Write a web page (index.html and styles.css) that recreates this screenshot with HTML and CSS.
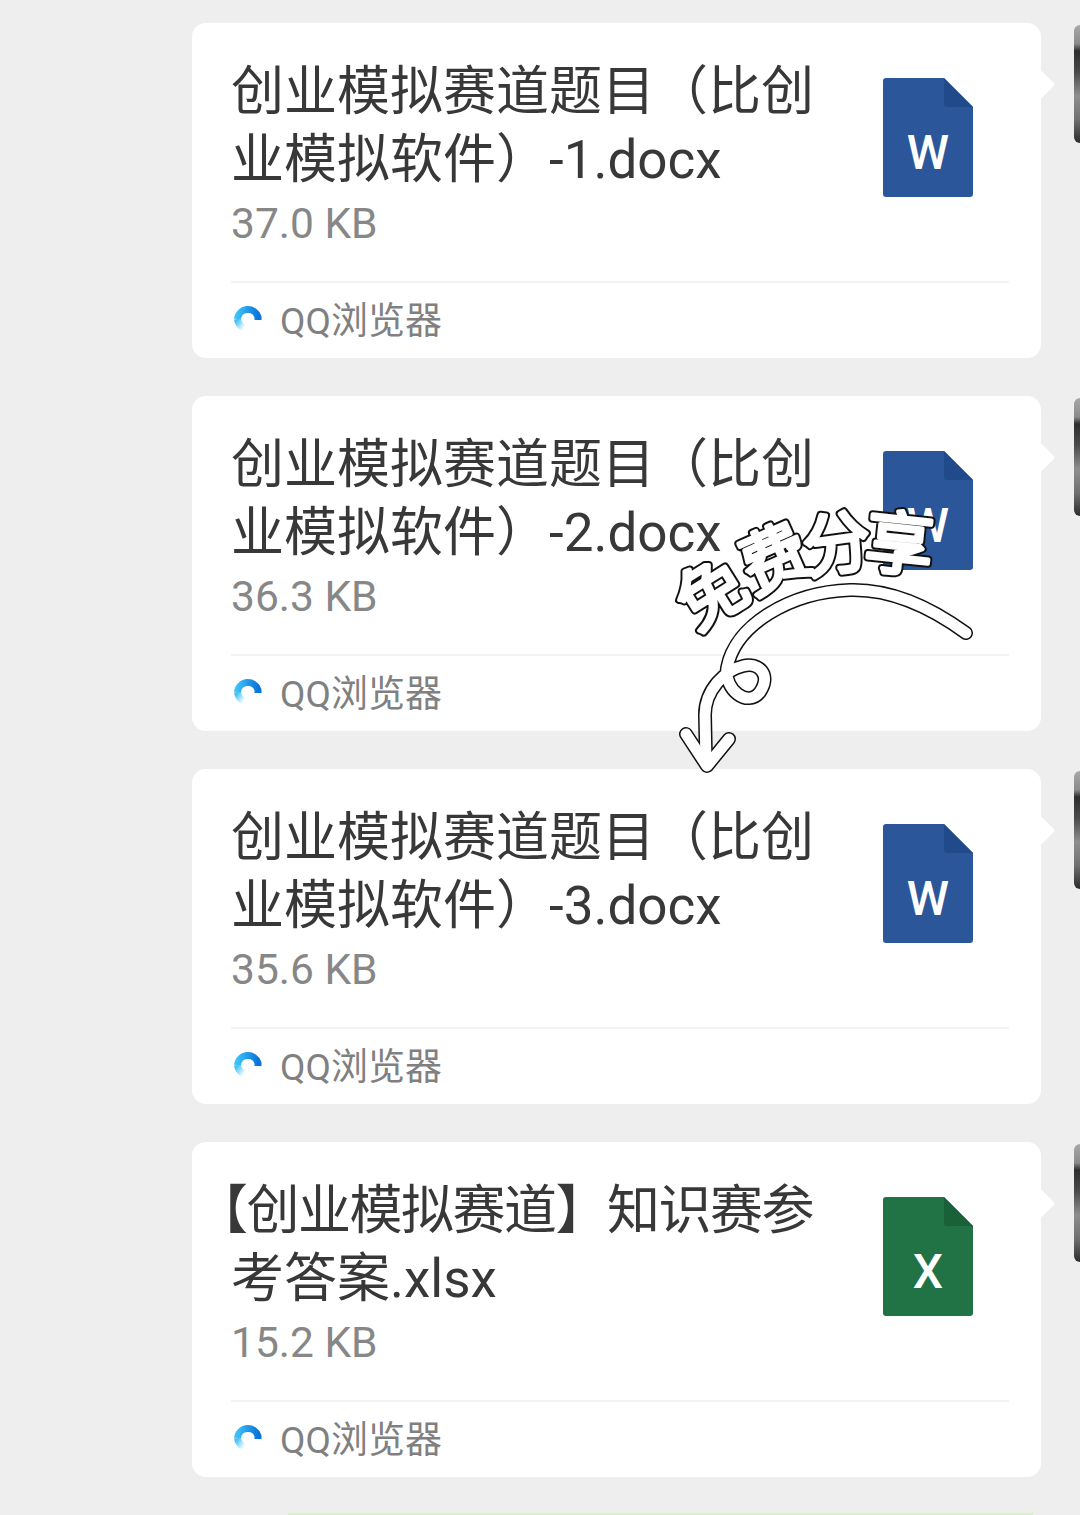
FILE: index.html
```html
<!DOCTYPE html>
<html lang="zh-CN">
<head>
  <meta charset="UTF-8">
  <meta name="viewport" content="width=device-width, initial-scale=1.0">
  <title>文件消息</title>
  <link rel="stylesheet" href="styles.css">
</head>
<body>
  <svg class="defs" width="0" height="0">
    <defs>
      <linearGradient id="qq-blue" x1="0" y1="0" x2="1" y2="0">
        <stop offset="0" stop-color="#3dc0f7"/>
        <stop offset="1" stop-color="#0b74dc"/>
      </linearGradient>
      <linearGradient id="qq-fade" x1="0" y1="0" x2="1" y2="1">
        <stop offset="0" stop-color="#3dc0f7"/>
        <stop offset="1" stop-color="#ffffff"/>
      </linearGradient>
      <symbol id="qq-logo" viewBox="0 0 32 32">
        <path class="qq-tail" d="M5.5 17 C6 21 8 24 12 26"/>
        <path class="qq-arc" d="M5.5 17 A10.5 10.5 0 0 1 26 15 L26 18"/>
      </symbol>
    </defs>
  </svg>

  <div class="list">
    <div class="row">
      <div class="card">
        <div class="card-top">
          <div class="info">
            <div class="name">创业模拟赛道题目（比创<br>业模拟软件）-1.docx</div>
            <div class="size">37.0 KB</div>
          </div>
          <svg class="file-icon word" width="90" height="119" viewBox="0 0 90 119">
            <path class="sheet" d="M3 0 H61 L90 29 V116 a3 3 0 0 1 -3 3 H3 a3 3 0 0 1 -3 -3 V3 a3 3 0 0 1 3 -3 Z"/>
            <path class="fold" d="M61 0 L90 29 H64 a3 3 0 0 1 -3 -3 Z"/>
            <text x="45" y="91">W</text>
          </svg>
        </div>
        <div class="source"><svg class="qq"><use href="#qq-logo"/></svg><span>QQ浏览器</span></div>
      </div>
      <div class="avatar"></div>
    </div>

    <div class="row">
      <div class="card">
        <div class="card-top">
          <div class="info">
            <div class="name">创业模拟赛道题目（比创<br>业模拟软件）-2.docx</div>
            <div class="size">36.3 KB</div>
          </div>
          <svg class="file-icon word" width="90" height="119" viewBox="0 0 90 119">
            <path class="sheet" d="M3 0 H61 L90 29 V116 a3 3 0 0 1 -3 3 H3 a3 3 0 0 1 -3 -3 V3 a3 3 0 0 1 3 -3 Z"/>
            <path class="fold" d="M61 0 L90 29 H64 a3 3 0 0 1 -3 -3 Z"/>
            <text x="45" y="91">W</text>
          </svg>
        </div>
        <div class="source"><svg class="qq"><use href="#qq-logo"/></svg><span>QQ浏览器</span></div>
      </div>
      <div class="avatar"></div>
    </div>

    <div class="row">
      <div class="card">
        <div class="card-top">
          <div class="info">
            <div class="name">创业模拟赛道题目（比创<br>业模拟软件）-3.docx</div>
            <div class="size">35.6 KB</div>
          </div>
          <svg class="file-icon word" width="90" height="119" viewBox="0 0 90 119">
            <path class="sheet" d="M3 0 H61 L90 29 V116 a3 3 0 0 1 -3 3 H3 a3 3 0 0 1 -3 -3 V3 a3 3 0 0 1 3 -3 Z"/>
            <path class="fold" d="M61 0 L90 29 H64 a3 3 0 0 1 -3 -3 Z"/>
            <text x="45" y="91">W</text>
          </svg>
        </div>
        <div class="source"><svg class="qq"><use href="#qq-logo"/></svg><span>QQ浏览器</span></div>
      </div>
      <div class="avatar"></div>
    </div>

    <div class="row">
      <div class="card">
        <div class="card-top">
          <div class="info">
            <div class="name"><span class="tight"><span class="open-bracket">【</span>创业模拟赛道】知识赛参</span><br>考答案.xlsx</div>
            <div class="size">15.2 KB</div>
          </div>
          <svg class="file-icon excel" width="90" height="119" viewBox="0 0 90 119">
            <path class="sheet" d="M3 0 H61 L90 29 V116 a3 3 0 0 1 -3 3 H3 a3 3 0 0 1 -3 -3 V3 a3 3 0 0 1 3 -3 Z"/>
            <path class="fold" d="M61 0 L90 29 H64 a3 3 0 0 1 -3 -3 Z"/>
            <text x="45" y="91">X</text>
          </svg>
        </div>
        <div class="source"><svg class="qq"><use href="#qq-logo"/></svg><span>QQ浏览器</span></div>
      </div>
      <div class="avatar"></div>
    </div>

    <div class="next-bubble"></div>
  </div>

  <!-- sticker over the second card -->
  <svg class="sticker" width="1080" height="1515" viewBox="0 0 1080 1515">
    <defs>
      <g id="sticker-words">
        <text transform="translate(709 589) rotate(-32)">免</text>
        <text transform="translate(772 554) rotate(-24)">费</text>
        <text transform="translate(836 539) rotate(-8)">分</text>
        <text transform="translate(900 539) rotate(6)">享</text>
      </g>
      <g id="sticker-arrow">
        <path d="M966 633 C925 603 885 589 850 590 C790 592 735 625 727 668 C724 690 748 708 760 692 C772 674 758 662 743 666 C725 670 705 690 705 715 L706 762"/>
        <path d="M686 734 L707 766 L729 739"/>
      </g>
    </defs>
    <use class="arrow-line" href="#sticker-arrow"/>
    <use class="arrow-fill" href="#sticker-arrow"/>
    <use class="words-line" href="#sticker-words"/>
    <use class="words-fill" href="#sticker-words"/>
  </svg>
</body>
</html>
```

FILE: styles.css
```css
html, body { margin: 0; padding: 0; }
body { width: 1080px; height: 1515px; overflow: hidden; background: #eeeeee; position: relative; font-family: Roboto, "Noto Sans CJK SC", sans-serif; }
.defs { position: absolute; }

.list { padding: 23px 0 0 192px; display: flex; flex-direction: column; gap: 38px; }
.row { display: flex; gap: 33px; }

.card { position: relative; width: 849px; height: 335px; flex: none; box-sizing: border-box; padding: 35px 32px 0 39px; background: #ffffff; border-radius: 14px; }
.card::after { content: ""; position: absolute; right: -10px; top: 51px; width: 21px; height: 21px; background: #ffffff; border-radius: 3px; transform: rotate(45deg); }

.card-top { display: flex; justify-content: space-between; align-items: flex-start; height: 223px; border-bottom: 2px solid #f3f3f3; }
.name { font-size: 53px; line-height: 68px; color: #383838; white-space: nowrap; }
.tight { letter-spacing: -1.5px; }
.open-bracket { margin-left: -36px; }
.size { font-size: 42.5px; line-height: 60px; color: #878787; }

.file-icon { flex: none; margin: 20px 36px 0 0; }
.file-icon text { font-family: Roboto, sans-serif; font-weight: 500; font-size: 48px; fill: #ffffff; text-anchor: middle; }
.word .sheet { fill: #2b579a; }
.word .fold { fill: #214a8a; }
.excel .sheet { fill: #217346; }
.excel .fold { fill: #1a6038; }

.source { display: flex; align-items: center; gap: 15px; height: 70px; font-size: 37px; color: #808080; }
.qq { width: 32px; height: 32px; margin-left: 1px; margin-right: 1px; }
.qq-arc { fill: none; stroke: url(#qq-blue); stroke-width: 7; }
.qq-tail { fill: none; stroke: url(#qq-fade); stroke-width: 7; }

.avatar { width: 6px; height: 118px; flex: none; margin-top: 2px; border-radius: 8px 0 0 8px; background: linear-gradient(180deg, #a8a8a8 0, #8a8a8a 16%, #2e2e2e 22%, #4a4a4a 40%, #8e8e8e 60%, #707070 80%, #2c2c2c 100%); }

.next-bubble { position: absolute; left: 288px; top: 1513px; width: 745px; height: 2px; background: #d6f3c6; }

.sticker { position: absolute; left: 0; top: 0; pointer-events: none; }
.arrow-line, .arrow-fill { fill: none; stroke-linecap: round; stroke-linejoin: round; }
.arrow-line { stroke: #111111; stroke-width: 14px; }
.arrow-fill { stroke: #ffffff; stroke-width: 11px; }
#sticker-words text { font-family: "Noto Sans CJK SC", sans-serif; font-size: 68px; font-weight: 400; text-anchor: middle; dominant-baseline: central; stroke-linejoin: round; stroke-linecap: round; }
.words-line { fill: #111111; stroke: #111111; stroke-width: 8px; }
.words-fill { fill: #ffffff; stroke: #ffffff; stroke-width: 4px; }
```
